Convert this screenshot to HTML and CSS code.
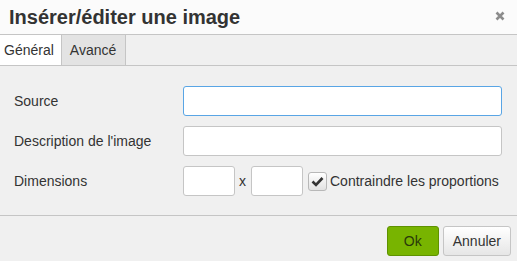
FILE: index.html
```html
<!DOCTYPE html>
<html lang="fr">
<head>
<meta charset="UTF-8">
<meta name="viewport" content="width=device-width, initial-scale=1.0">
<title>Insérer/éditer une image</title>
<link rel="stylesheet" href="styles.css">
</head>
<body>

<div class="dialog">
    <div class="dialog-head">
        <span class="dialog-title">Insérer/éditer une image</span>
        <span class="close">
            <svg width="10" height="10" viewBox="0 0 10 10">
                <path d="M1.5 1.5 L8.5 8.5 M8.5 1.5 L1.5 8.5" stroke="#8c8c8c" stroke-width="2.6" fill="none"/>
            </svg>
        </span>
    </div>

    <div class="tabs">
        <div class="tab active">Général</div>
        <div class="tab">Avancé</div>
    </div>

    <form class="dialog-body">
        <div class="row">
            <label for="src">Source</label>
            <input type="text" id="src" class="field focus">
        </div>
        <div class="row">
            <label for="alt">Description de l'image</label>
            <input type="text" id="alt" class="field">
        </div>
        <div class="row">
            <label for="width">Dimensions</label>
            <div class="dims">
                <input type="text" id="width" class="field small">
                <span class="times">x</span>
                <input type="text" id="height" class="field small">
                <span class="check">
                    <svg width="13" height="11" viewBox="0 0 13 11">
                        <path d="M1.5 5.5 L5 9 L11.5 2" stroke="#333" stroke-width="2.6" fill="none"/>
                    </svg>
                </span>
                <span class="check-label">Contraindre les proportions</span>
            </div>
        </div>
    </form>

    <div class="dialog-foot">
        <button class="btn primary" type="button">Ok</button>
        <button class="btn" type="button">Annuler</button>
    </div>
</div>

</body>
</html>
```

FILE: styles.css
```css
body {
    margin: 0;
    background-color: #f0f0f0;
    font-family: "Liberation Sans", Arial, sans-serif;
    color: #333;
}
.dialog {
    width: 517px;
    height: 261px;
}
.dialog-head {
    height: 34px;
    background-color: #fbfbfb;
    border-bottom: 1px solid #c5c5c5;
    display: flex;
    align-items: center;
    justify-content: space-between;
    padding: 0 12px 0 9px;
}
.dialog-title {
    font-size: 20px;
    font-weight: bold;
    color: #333;
}
.close {
    display: flex;
    margin-top: -2px;
}
.tabs {
    height: 30px;
    border-bottom: 1px solid #c5c5c5;
    display: flex;
    font-size: 14px;
}
.tab {
    padding: 0 9px 0 8px;
    line-height: 30px;
    background-color: #e3e3e3;
    border-right: 1px solid #c5c5c5;
}
.tab.active {
    background-color: #fff;
    padding: 0 7px 0 4px;
    border-right: 1px solid #c5c5c5;
}
.dialog-body {
    padding: 20px 15px 19px 14px;
    display: flex;
    flex-direction: column;
    gap: 10px;
}
.row {
    display: flex;
    align-items: center;
    height: 30px;
    font-size: 14px;
}
.row label {
    width: 169px;
}
.field {
    box-sizing: border-box;
    width: 319px;
    height: 30px;
    border: 1px solid #c5c5c5;
    border-radius: 3px;
    background-color: #fff;
    margin: 0;
    padding: 0 6px;
}
.field.focus {
    border-color: #59a5e5;
}
.field.small {
    width: 52px;
}
.dims {
    display: flex;
    align-items: center;
}
.times {
    margin: 0 5px 0 4px;
}
.check {
    box-sizing: border-box;
    width: 19px;
    height: 19px;
    margin-left: 5px;
    border: 1px solid #b8b8b8;
    border-radius: 3px;
    background: linear-gradient(#fff, #e2e2e2);
    display: flex;
    align-items: center;
    justify-content: center;
}
.check-label {
    margin-left: 3px;
}
.dialog-foot {
    border-top: 1px solid #c5c5c5;
    padding-top: 10px;
    padding-right: 6px;
    display: flex;
    justify-content: flex-end;
    gap: 4px;
}
.btn {
    box-sizing: border-box;
    height: 30px;
    padding: 0 9px;
    font-family: "Liberation Sans", Arial, sans-serif;
    font-size: 14px;
    color: #333;
    border: 1px solid #c5c5c5;
    border-radius: 3px;
    background: linear-gradient(#fff, #e6e6e6);
}
.btn.primary {
    width: 52px;
    background: #78b400;
    border-color: #5f9200;
    color: #2a3a0a;
}
```
